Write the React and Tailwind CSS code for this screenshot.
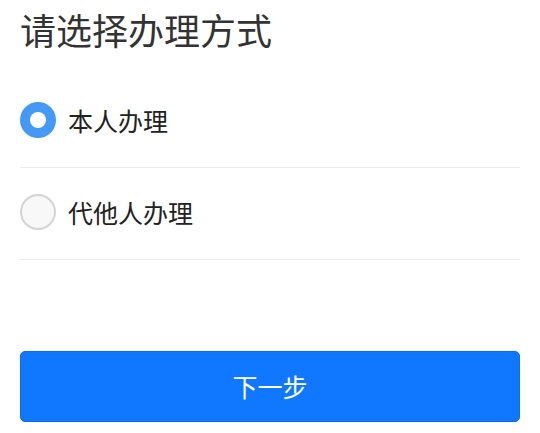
import React, { useState } from 'react'

const options = ['本人办理', '代他人办理']

function Radio({ checked }) {
  return checked ? (
    <span className="flex items-center justify-center w-9 h-9 rounded-full bg-[#4399f4] shrink-0">
      <span className="w-4 h-4 rounded-full bg-white" />
    </span>
  ) : (
    <span className="w-9 h-9 rounded-full border-2 border-[#d4d4d4] bg-[#f8f8f8] shrink-0" />
  )
}

export default function App() {
  const [selected, setSelected] = useState(0)

  return (
    <div className="min-h-[433px] bg-white px-5 font-['Noto_Sans_CJK_SC','Noto_Sans',sans-serif]">
      <h1 className="h-[76px] pt-[9px] text-[36px] leading-[40px] text-[#333]">请选择办理方式</h1>

      <div className="flex flex-col">
        {options.map((label, i) => (
          <label
            key={label}
            className="flex items-center gap-3 h-[92px] pb-[3px] border-b border-[#ececec] cursor-pointer"
            onClick={() => setSelected(i)}
          >
            <Radio checked={selected === i} />
            <span className="text-[25px] leading-none text-[#222]">{label}</span>
          </label>
        ))}
      </div>

      <button className="w-full h-[71px] mt-[91px] rounded-[5px] border border-[#0b6ee6] bg-[#0f78ff] text-white text-[25px]">
        下一步
      </button>
    </div>
  )
}
